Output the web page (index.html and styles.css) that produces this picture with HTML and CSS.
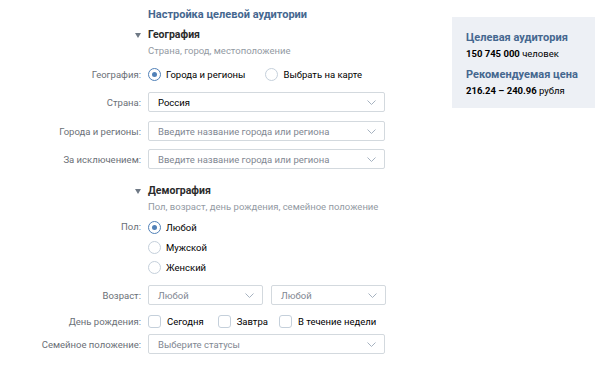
FILE: index.html
```html
<!DOCTYPE html>
<html lang="ru">
<head>
    <meta charset="UTF-8">
    <title>Настройка целевой аудитории</title>
    <link rel="stylesheet" href="styles.css">
</head>
<body>

<div class="page">
    <div class="main">
        <h2 class="title">Настройка целевой аудитории</h2>

        <div class="section">
            <div class="section-head"><span class="arrow"></span>География</div>
            <div class="section-sub">Страна, город, местоположение</div>
        </div>

        <div class="row row-geo">
            <div class="label">География:</div>
            <div class="control inline">
                <label class="radio checked"><span class="dot"></span>Города и регионы</label>
                <label class="radio"><span class="dot"></span>Выбрать на карте</label>
            </div>
        </div>

        <div class="row row-select">
            <div class="label">Страна:</div>
            <div class="select"><span class="value">Россия</span><svg class="chev" width="9" height="5" viewBox="0 0 9 5"><path d="M0.5 0.5L4.5 4.5L8.5 0.5" fill="none" stroke="#a6b2c0"/></svg></div>
        </div>
        <div class="row row-select wide-gap">
            <div class="label">Города и регионы:</div>
            <div class="select"><span class="placeholder">Введите название города или региона</span><svg class="chev" width="9" height="5" viewBox="0 0 9 5"><path d="M0.5 0.5L4.5 4.5L8.5 0.5" fill="none" stroke="#a6b2c0"/></svg></div>
        </div>
        <div class="row row-select">
            <div class="label">За исключением:</div>
            <div class="select"><span class="placeholder">Введите название города или региона</span><svg class="chev" width="9" height="5" viewBox="0 0 9 5"><path d="M0.5 0.5L4.5 4.5L8.5 0.5" fill="none" stroke="#a6b2c0"/></svg></div>
        </div>

        <div class="section section-demo">
            <div class="section-head"><span class="arrow"></span>Демография</div>
            <div class="section-sub">Пол, возраст, день рождения, семейное положение</div>
        </div>

        <div class="row row-sex">
            <div class="label">Пол:</div>
            <div class="control stack">
                <label class="radio checked"><span class="dot"></span>Любой</label>
                <label class="radio"><span class="dot"></span>Мужской</label>
                <label class="radio"><span class="dot"></span>Женский</label>
            </div>
        </div>

        <div class="row row-age">
            <div class="label">Возраст:</div>
            <div class="control pair">
                <div class="select small"><span class="placeholder">Любой</span><svg class="chev" width="9" height="5" viewBox="0 0 9 5"><path d="M0.5 0.5L4.5 4.5L8.5 0.5" fill="none" stroke="#a6b2c0"/></svg></div>
                <div class="select small"><span class="placeholder">Любой</span><svg class="chev" width="9" height="5" viewBox="0 0 9 5"><path d="M0.5 0.5L4.5 4.5L8.5 0.5" fill="none" stroke="#a6b2c0"/></svg></div>
            </div>
        </div>

        <div class="row row-bday">
            <div class="label">День рождения:</div>
            <div class="control inline">
                <label class="check"><span class="box"></span>Сегодня</label>
                <label class="check"><span class="box"></span>Завтра</label>
                <label class="check"><span class="box"></span>В течение недели</label>
            </div>
        </div>

        <div class="row row-family">
            <div class="label">Семейное положение:</div>
            <div class="select"><span class="placeholder">Выберите статусы</span><svg class="chev" width="9" height="5" viewBox="0 0 9 5"><path d="M0.5 0.5L4.5 4.5L8.5 0.5" fill="none" stroke="#a6b2c0"/></svg></div>
        </div>
    </div>

    <div class="side">
        <div class="side-title">Целевая аудитория</div>
        <div class="side-value"><b>150 745 000</b> человек</div>
        <div class="side-title second">Рекомендуемая цена</div>
        <div class="side-value"><b>216.24 – 240.96</b> рубля</div>
    </div>
</div>

</body>
</html>
```

FILE: styles.css
```css
body {
    margin: 0;
    background: #fff;
    font-family: Roboto, "Open Sans", Arial, sans-serif;
    font-size: 9.5px;
    color: #000;
    white-space: nowrap;
}
.page {
    display: flex;
    align-items: flex-start;
}
.main {
    width: 385px;
    flex-shrink: 0;
}
.title {
    margin: 7px 0 0 148px;
    font-size: 11px;
    line-height: 16px;
    font-weight: bold;
    color: #45678f;
}
.section {
    margin: 4px 0 0 148px;
}
.section-head {
    position: relative;
    font-size: 10.5px;
    font-weight: bold;
    line-height: 16px;
    color: #2b2b2b;
}
.arrow {
    position: absolute;
    left: -13px;
    top: 6px;
    border-left: 3px solid transparent;
    border-right: 3px solid transparent;
    border-top: 5px solid #6f7985;
}
.section-sub {
    margin-top: 1px;
    line-height: 14px;
    color: #939aa3;
}
.section-demo {
    margin-top: 14px;
}
.row {
    display: flex;
    align-items: center;
}
.label {
    width: 148px;
    padding-right: 7px;
    box-sizing: border-box;
    text-align: right;
    color: #6a6f76;
    flex-shrink: 0;
}
.row-geo {
    height: 20px;
    margin-top: 6px;
}
.inline {
    display: flex;
    align-items: center;
}
.radio, .check {
    display: flex;
    align-items: center;
    height: 20px;
    color: #000;
}
.row-geo .radio + .radio {
    margin-left: 20px;
}
.dot {
    width: 11px;
    height: 11px;
    border: 1px solid #c5d0db;
    border-radius: 50%;
    margin-right: 5px;
    position: relative;
    background: #fff;
}
.checked .dot {
    border-color: #5181b8;
}
.checked .dot::after {
    content: "";
    position: absolute;
    left: 3px;
    top: 3px;
    width: 5px;
    height: 5px;
    border-radius: 50%;
    background: #5181b8;
}
.select {
    position: relative;
    width: 237px;
    height: 20px;
    box-sizing: border-box;
    border: 1px solid #d3d9de;
    border-radius: 2px;
    padding: 0 28px 0 9px;
    display: flex;
    align-items: center;
    background: #fff;
    flex-shrink: 0;
}
.select.small {
    width: 115px;
}
.value {
    color: #000;
}
.placeholder {
    color: #7f8792;
}
.chev {
    position: absolute;
    right: 8px;
    top: 7px;
}
.row-select {
    margin-top: 8px;
}
.row-select.wide-gap {
    margin-top: 9px;
}
.row-sex {
    align-items: flex-start;
    margin-top: 3px;
}
.row-sex .label {
    line-height: 20px;
}
.stack {
    display: flex;
    flex-direction: column;
}
.pair {
    display: flex;
    gap: 8px;
}
.row-age {
    margin-top: 8px;
}
.row-bday {
    height: 20px;
    margin-top: 6px;
}
.box {
    width: 11px;
    height: 11px;
    border: 1px solid #c5d0db;
    border-radius: 3px;
    margin-right: 6px;
}
.check + .check {
    margin-left: 14px;
}
.check:last-child {
    margin-left: 11px;
}
.row-family {
    margin-top: 3px;
}
.side {
    margin: 17px 0 0 67px;
    width: 143px;
    box-sizing: border-box;
    padding: 13px 0 10px 14px;
    background: #edf0f5;
}
.side-title {
    font-size: 11px;
    font-weight: bold;
    line-height: 16px;
    color: #45678f;
}
.side-title.second {
    margin-top: 6px;
}
.side-value {
    line-height: 15px;
    font-size: 9.5px;
}
```
